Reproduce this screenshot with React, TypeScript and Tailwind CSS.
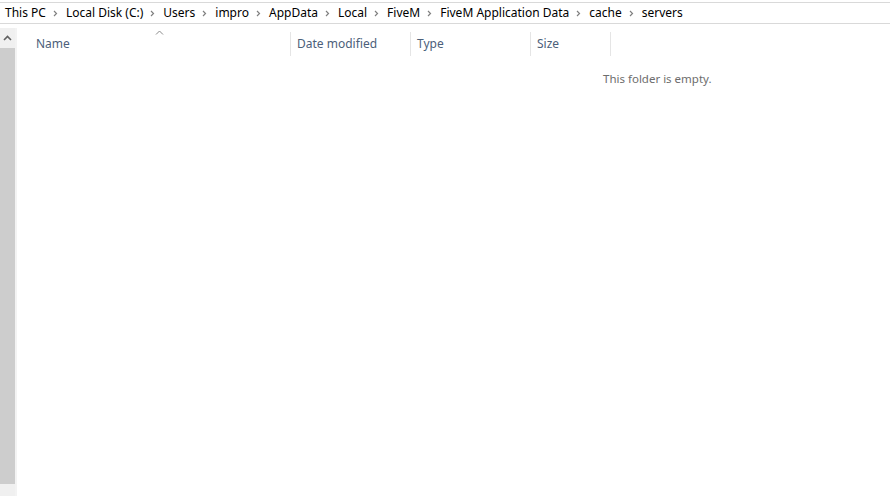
import React from "react";

const crumbs = ["This PC", "Local Disk (C:)", "Users", "impro", "AppData", "Local", "FiveM", "FiveM Application Data", "cache", "servers"];

const Chevron = () => (
  <svg width="5" height="7" viewBox="0 0 5 7" className="ml-[7px] mr-[8px] shrink-0">
    <path d="M1 1 L3.5 3.5 L1 6" stroke="#808080" strokeWidth="1.2" fill="none" />
  </svg>
);

const columns = [
  { label: "Date modified", width: "w-[120px]" },
  { label: "Type", width: "w-[120px]" },
  { label: "Size", width: "w-[80px]" },
];

export default function App() {
  return (
    <div
      className="w-[890px] h-[496px] bg-white overflow-hidden flex flex-col text-[12px]"
      style={{ fontFamily: '"Segoe UI", "Noto Sans", sans-serif' }}
    >
      {/* address bar */}
      <div className="mt-[2px] h-[22px] shrink-0 border-y border-[#d9d9d9] flex items-center pl-[5px] text-black">
        {crumbs.map((c, i) => (
          <React.Fragment key={c + i}>
            {i > 0 && <Chevron />}
            <span className="whitespace-nowrap leading-none">{c}</span>
          </React.Fragment>
        ))}
      </div>

      <div className="flex flex-1 min-h-0">
        {/* scrollbar */}
        <div className="w-[15px] mt-[4px] bg-[#f0f0f0] flex flex-col shrink-0">
          <div className="h-[20px] flex items-center justify-center">
            <svg width="9" height="6" viewBox="0 0 9 6">
              <path d="M1 5 L4.5 1.5 L8 5" stroke="#606060" strokeWidth="1.6" fill="none" />
            </svg>
          </div>
          <div className="flex-1 bg-[#cdcdcd] mb-[12px]" />
        </div>
        <div className="w-[2px] mt-[4px] bg-[#f3f3f3] shrink-0" />

        {/* content */}
        <div className="flex-1 flex flex-col">
          <div className="mt-[8px] h-[24px] flex relative text-[#4c607a]">
            <div className="w-[273px] pl-[19px] flex items-center">Name</div>
            {columns.map((col) => (
              <div key={col.label} className={`${col.width} flex items-center border-l border-[#e5e5e5] pl-[6px]`}>
                {col.label}
              </div>
            ))}
            <div className="border-l border-[#e5e5e5]" />
            <svg width="9" height="5" viewBox="0 0 9 5" className="absolute left-[138px] top-[-2px]">
              <path d="M1 4.5 L4.5 1 L8 4.5" stroke="#8a8a8a" strokeWidth="1" fill="none" />
            </svg>
          </div>
          <div className="mt-[14px] text-[#6d6d6d] text-[11.5px] pl-[586px] whitespace-nowrap">This folder is empty.</div>
        </div>
      </div>
    </div>
  );
}
